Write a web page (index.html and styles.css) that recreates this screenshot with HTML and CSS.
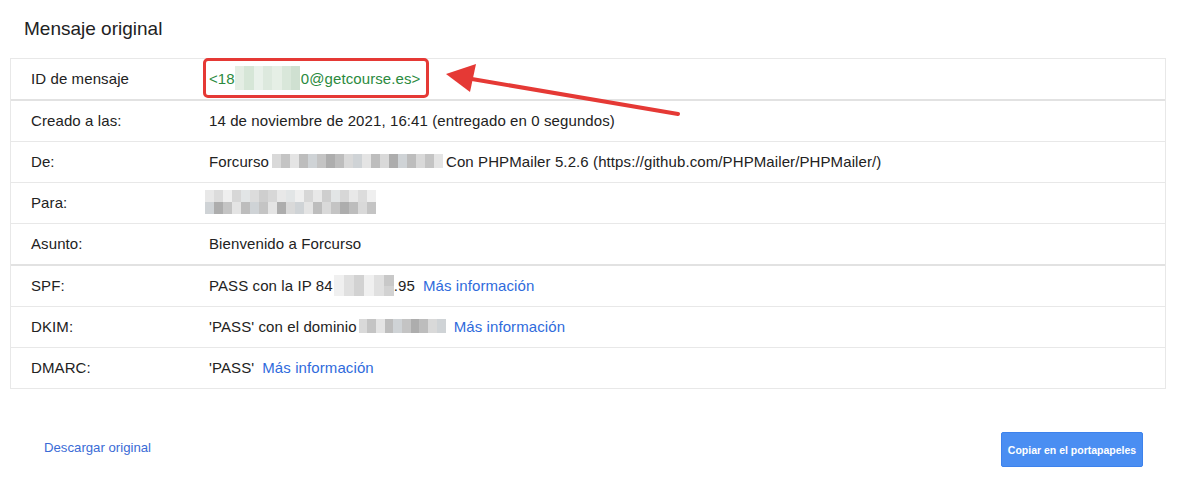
FILE: index.html
```html
<!DOCTYPE html>
<html lang="es">
<head>
<meta charset="utf-8">
<title>Mensaje original</title>
<link rel="stylesheet" href="styles.css">
</head>
<body>
<div class="page">
  <h1 class="title">Mensaje original</h1>
  <div class="table">
    <div class="row sep">
      <div class="label">ID de mensaje</div>
      <div class="value">
        <span class="msgid">&lt;18<span class="blur green"><i></i><i></i><i></i><i></i><i></i><i></i><i></i></span>0@getcourse.es&gt;</span>
      </div>
    </div>
    <div class="row">
      <div class="label">Creado a las:</div>
      <div class="value">14 de noviembre de 2021, 16:41 (entregado en 0 segundos)</div>
    </div>
    <div class="row">
      <div class="label">De:</div>
      <div class="value">Forcurso <span class="blur gray wide"><i></i><i></i><i></i><i></i><i></i><i></i><i></i><i></i><i></i><i></i><i></i><i></i><i></i><i></i><i></i><i></i><i></i><i></i><i></i></span> Con PHPMailer 5.2.6 (https://github.com/PHPMailer/PHPMailer/)</div>
    </div>
    <div class="row">
      <div class="label">Para:</div>
      <div class="value"><span class="blur gray tworow"><i></i><i></i><i></i><i></i><i></i><i></i><i></i><i></i><i></i><i></i><i></i><i></i><i></i><i></i><i></i><i></i><i></i><i></i><i></i><i></i><i></i><i></i><i></i><i></i><i></i><i></i><i></i><i></i><i></i><i></i><i></i><i></i><i></i><i></i><i></i><i></i><i></i><i></i></span></div>
    </div>
    <div class="row sep">
      <div class="label">Asunto:</div>
      <div class="value">Bienvenido a Forcurso</div>
    </div>
    <div class="row">
      <div class="label">SPF:</div>
      <div class="value">PASS con la IP 84<span class="blur light ip"><i></i><i></i><i></i><i></i><i></i><i></i><i></i><i></i><i></i><i></i><i></i><i></i></span>.95 <a class="link" href="#">Más información</a></div>
    </div>
    <div class="row">
      <div class="label">DKIM:</div>
      <div class="value">'PASS' con el dominio <span class="blur gray dom"><i></i><i></i><i></i><i></i><i></i><i></i><i></i><i></i><i></i><i></i></span> <a class="link" href="#">Más información</a></div>
    </div>
    <div class="row">
      <div class="label">DMARC:</div>
      <div class="value">'PASS' <a class="link" href="#">Más información</a></div>
    </div>
  </div>
  <div class="footer">
    <a class="download" href="#">Descargar original</a>
    <button class="copy" type="button">Copiar en el portapapeles</button>
  </div>
  <svg class="arrow" width="260" height="70" viewBox="0 0 260 70" xmlns="http://www.w3.org/2000/svg">
    <line x1="232" y1="52" x2="20" y2="16" stroke="#e53935" stroke-width="4" stroke-linecap="round"/>
    <polygon points="0,12 30,2 24,30" fill="#e53935"/>
  </svg>
</div>
</body>
</html>
```
FILE: styles.css
```css
* { box-sizing: border-box; }
html, body { margin: 0; padding: 0; background: #fff; }
body {
  font-family: "Liberation Sans", Arial, sans-serif;
  color: #222;
  width: 1200px;
  height: 495px;
  overflow: hidden;
}
.page {
  position: relative;
  padding: 0 34px 0 10px;
}
.title {
  margin: 0;
  padding: 18px 0 18px 14px;
  font-size: 19px;
  line-height: 22px;
  font-weight: normal;
  color: #222;
}
.table {
  border: 1px solid #e8e8e8;
  border-bottom-width: 0;
}
.row {
  display: grid;
  grid-template-columns: 198px 1fr;
  height: 41px;
  padding-bottom: 2px;
  align-items: center;
  border-bottom: 1px solid #e8e8e8;
  font-size: 15px;
  letter-spacing: 0.1px;
}
.row.sep {
  height: 42px;
  border-bottom: 2px solid #e2e2e2;
}
.label {
  padding-left: 20px;
}
.value {
  position: relative;
  white-space: nowrap;
  display: flex;
  align-items: center;
}
.msgid {
  position: relative;
  color: #2b8a3e;
  display: inline-flex;
  align-items: center;
}
.msgid::after {
  content: "";
  position: absolute;
  left: -6px;
  right: -9px;
  top: -8px;
  bottom: -8px;
  border: 3px solid #e53935;
  border-radius: 5px;
}
.blur {
  display: inline-flex;
  flex-wrap: wrap;
  vertical-align: middle;
}
.blur i {
  display: block;
  width: 9px;
  height: 9px;
}
.blur.green { width: 66px; height: 24px; margin: 0; }
.blur.green i { height: 24px; width: 9.4px; }
.blur.green i:nth-child(1) { background: #e4eee4; }
.blur.green i:nth-child(2) { background: #d6e6d7; }
.blur.green i:nth-child(3) { background: #e9f1ea; }
.blur.green i:nth-child(4) { background: #dde9de; }
.blur.green i:nth-child(5) { background: #e6efe6; }
.blur.green i:nth-child(6) { background: #d9e7da; }
.blur.green i:nth-child(7) { background: #cfe0d1; }

.blur.gray i:nth-child(4n+1) { background: #d9d9d9; }
.blur.gray i:nth-child(4n+2) { background: #c4c4c4; }
.blur.gray i:nth-child(4n+3) { background: #e4e4e4; }
.blur.gray i:nth-child(4n) { background: #bdbdbd; }
.blur.gray i:nth-child(5n) { background: #cfd3d6; }
.blur.gray i:nth-child(7n) { background: #adadad; }

.blur.wide { width: 171px; height: 14px; margin: 0 3px 0 3px; }
.blur.wide i { height: 14px; }
.blur.tworow { width: 171px; height: 24px; margin-left: -4px; }
.blur.tworow i { height: 12px; }
.blur.tworow i:nth-child(-n+19) { opacity: 0.6; }
.blur.light.ip { width: 60px; height: 21px; margin-left: 1px; }
.blur.light i { width: 10px; }
.blur.light i:nth-child(-n+6) { height: 11px; }
.blur.light i:nth-child(n+7) { height: 10px; }
.blur.light i:nth-child(3n+1) { background: #f0f0f0; }
.blur.light i:nth-child(3n+2) { background: #e0e0e0; }
.blur.light i:nth-child(3n) { background: #d2d2d2; }
.blur.light i:nth-child(6) { background: #c8c8c8; }
.blur.dom { width: 87px; height: 14px; margin: 0 0 0 2px; }
.blur.dom i { width: 8.7px; height: 14px; }

.link {
  color: #2f6bdc;
  text-decoration: none;
  margin-left: 8px;
}
.footer {
  display: flex;
  justify-content: space-between;
  align-items: center;
  padding: 43px 23px 0 34px;
}
.download {
  color: #3a6bd6;
  font-size: 13.2px;
  text-decoration: none;
  position: relative;
  top: -2px;
}
.copy {
  width: 142px;
  height: 35px;
  padding: 0;
  background: #4a8ef2;
  border: 1px solid #3d82ec;
  border-radius: 2px;
  color: #fff;
  font-family: "Liberation Sans", Arial, sans-serif;
  font-size: 10.5px;
  font-weight: bold;
}
.arrow {
  position: absolute;
  left: 446px;
  top: 62px;
}
```
